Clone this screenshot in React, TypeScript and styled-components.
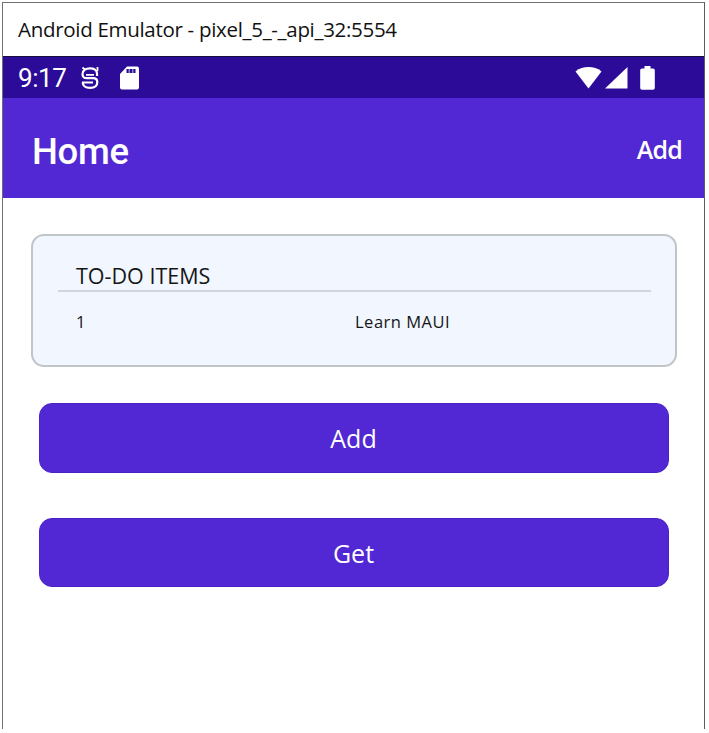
import React from "react";
import styled, { createGlobalStyle } from "styled-components";

const GlobalStyle = createGlobalStyle`
  * { box-sizing: border-box; }
  html, body { margin: 0; background: #fff; }
  body { font-family: "Open Sans", "Noto Sans", sans-serif; }
`;

const Page = styled.div`
  width: 709px;
  height: 733px;
  padding: 2px 4px 4px 2px;
  background: #fff;
`;

const EmulatorWindow = styled.div`
  height: 727px;
  border: 1px solid #707070;
  border-right-color: #5c5c5c;
  border-bottom: 0;
  background: #fff;
`;

const TitleBar = styled.header`
  height: 54px;
  padding: 11px 0 0 15px;
  border-bottom: 1px solid #16103a;
  color: #111;
  font-size: 20.5px;
  line-height: 30px;
  letter-spacing: -0.3px;
  white-space: nowrap;
`;

const StatusBar = styled.div`
  display: flex;
  align-items: center;
  height: 41px;
  padding: 0 49px 0 15px;
  background: #2b0b98;
  color: #fff;
`;

const Clock = styled.span`
  width: 63px;
  font: 400 26px/42px Roboto, sans-serif;
  letter-spacing: -0.4px;
`;

const StatusGroup = styled.div<{ $gap: number; $end?: boolean }>`
  display: flex;
  align-items: center;
  gap: ${(p) => p.$gap}px;
  margin-left: ${(p) => (p.$end ? "auto" : "0")};
  svg { display: block; }
`;

const SignalGroup = styled.div`
  display: flex;
  gap: 3px;
  margin-right: 12px;
`;

const AppBar = styled.div`
  display: flex;
  align-items: center;
  justify-content: space-between;
  height: 100px;
  padding: 0 22px 0 29px;
  background: #5128d4;
  color: #fff;
`;

const PageTitle = styled.h1`
  margin: 7px 0 0;
  font: 500 36.5px/44px Roboto, sans-serif;
  letter-spacing: -0.3px;
`;

const ToolbarAction = styled.button`
  margin: 2px 0 0;
  padding: 0;
  border: 0;
  background: none;
  color: #fff;
  font: 600 25px/34px "Open Sans", sans-serif;
  letter-spacing: -0.8px;
`;

const Content = styled.main`
  display: flex;
  flex-direction: column;
  padding: 36px 27px 0 28px;
`;

const Card = styled.section`
  height: 133px;
  padding: 26px 24px 0 25px;
  border: 2px solid #c0c5c8;
  border-radius: 13px;
  background: #f1f6ff;
  color: #161616;
`;

const CardTitle = styled.h2`
  height: 30px;
  margin: 0;
  padding-left: 18px;
  border-bottom: 2px solid #d2d6da;
  font-size: 21.5px;
  font-weight: 500;
  line-height: 28px;
  letter-spacing: 0;
`;

const ItemRow = styled.div`
  display: grid;
  grid-template-columns: 279px 1fr;
  padding: 18px 0 0 18px;
  font-size: 16.5px;
  line-height: 24px;
  letter-spacing: 0.5px;
`;

const ActionButton = styled.button<{ $gapAbove: number; $height: number }>`
  height: ${(p) => p.$height}px;
  margin: ${(p) => p.$gapAbove}px 8px 0;
  padding: 0 1px 0 0;
  border: 1px solid #4a22c4;
  border-radius: 13px;
  background: #5128d4;
  color: #fff;
  font: 400 25px/34px "Open Sans", sans-serif;
`;

const DebugIcon = () => (
  <svg width="18" height="24" viewBox="0 0 18 24" fill="none" stroke="#fff" strokeWidth="2.2">
    <path d="M16 10V7.500C16 4 13 2.300 9 2.300S1.500 4 1.500 8.200c0 2.600 1.500 4 4.500 4h6c2.700 0 4.300 1.300 4.300 4 0 3.800-2.800 5.600-7.300 5.600s-7.300-2-7.300-5.300" />
    <path d="M1 16.500h11M5 8.800h8M1.500 1.500l3 2.500M16.500 1v4" strokeWidth="1.8" />
  </svg>
);

const SdCardIcon = () => (
  <svg width="19" height="24" viewBox="0 0 19 24">
    <path fill="#fff" d="M7 .5h10a2 2 0 0 1 2 2v19a2 2 0 0 1-2 2H2a2 2 0 0 1-2-2V8z" />
    <path stroke="#2b0b98" strokeWidth="2" d="M7.500 3v4M11 3v4M14.500 3v4" />
    <path stroke="#2b0b98" strokeOpacity=".5" strokeWidth="4" d="M7 5h8" />
  </svg>
);

const WifiIcon = () => (
  <svg width="27" height="24" viewBox="0 0 27 24">
    <path fill="#fff" d="M.5 5.500C4.500 2 8.500 1 13.500 1s9 1 13 4.500L13.500 22.500z" />
  </svg>
);

const SignalIcon = () => (
  <svg width="23" height="24" viewBox="0 0 23 24">
    <path fill="#fff" d="M22.500 1v21.500H0z" />
  </svg>
);

const BatteryIcon = () => (
  <svg width="15" height="24" viewBox="0 0 15 24">
    <path fill="#fff" d="M4.500 0h6v2.500H13a1.800 1.800 0 0 1 1.800 1.800V22a1.800 1.800 0 0 1-1.800 1.800H2A1.800 1.800 0 0 1 .2 22V4.300A1.800 1.800 0 0 1 2 2.500h2.500z" />
  </svg>
);

export default function App() {
  return (
    <Page>
      <GlobalStyle />
      <EmulatorWindow>
        <TitleBar>Android Emulator - pixel_5_-_api_32:5554</TitleBar>
        <StatusBar>
          <Clock>9:17</Clock>
          <StatusGroup $gap={21}>
            <DebugIcon />
            <SdCardIcon />
          </StatusGroup>
          <StatusGroup $gap={0} $end>
            <SignalGroup>
              <WifiIcon />
              <SignalIcon />
            </SignalGroup>
            <BatteryIcon />
          </StatusGroup>
        </StatusBar>
        <AppBar>
          <PageTitle>Home</PageTitle>
          <ToolbarAction>Add</ToolbarAction>
        </AppBar>
        <Content>
          <Card>
            <CardTitle>TO-DO ITEMS</CardTitle>
            <ItemRow>
              <span>1</span>
              <span>Learn MAUI</span>
            </ItemRow>
          </Card>
          <ActionButton $gapAbove={36} $height={70}>Add</ActionButton>
          <ActionButton $gapAbove={45} $height={69}>Get</ActionButton>
        </Content>
      </EmulatorWindow>
    </Page>
  );
}
